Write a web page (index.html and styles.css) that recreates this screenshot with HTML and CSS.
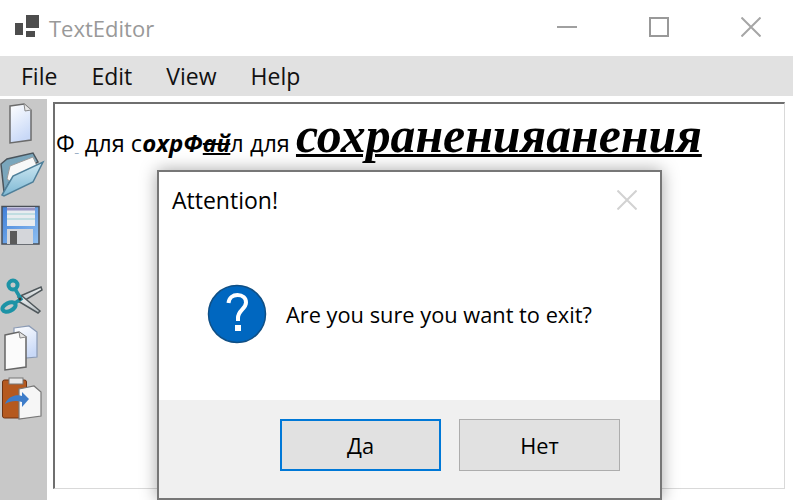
FILE: index.html
```html
<!DOCTYPE html>
<html lang="ru">
<head>
    <meta charset="UTF-8">
    <title>TextEditor</title>
    <link rel="stylesheet" href="styles.css">
</head>
<body>
    <div class="window">
        <div class="titlebar">
            <svg class="app-icon" width="26" height="24" viewBox="0 0 26 24">
                <rect x="1" y="9" width="8" height="12" fill="#4d4d4d"/>
                <rect x="12" y="1" width="13" height="13" fill="#4d4d4d"/>
                <rect x="12" y="17" width="9" height="6" fill="#4d4d4d"/>
            </svg>
            <span class="app-title">TextEditor</span>
            <div class="controls">
                <svg width="20" height="20" viewBox="0 0 20 20"><path d="M0 10H20" stroke="#a0a0a0" stroke-width="2"/></svg>
                <svg width="20" height="20" viewBox="0 0 20 20"><rect x="1" y="1" width="18" height="18" fill="none" stroke="#999" stroke-width="2"/></svg>
                <svg width="20" height="20" viewBox="0 0 20 20"><path d="M0.5 0.5L19.5 19.5M19.5 0.5L0.5 19.5" stroke="#a6a6a6" stroke-width="2"/></svg>
            </div>
        </div>
        <div class="menubar">
            <span>File</span>
            <span>Edit</span>
            <span>View</span>
            <span>Help</span>
        </div>
        <div class="main">
            <div class="toolbar">
                <!-- new -->
                <svg class="tool" viewBox="0 0 47 50">
                    <defs>
                        <linearGradient id="page" x1="0" y1="0" x2="0.4" y2="1">
                            <stop offset="0" stop-color="#ffffff"/>
                            <stop offset="1" stop-color="#c9d9f7"/>
                        </linearGradient>
                        <linearGradient id="blue" x1="0" y1="0" x2="0" y2="1">
                            <stop offset="0" stop-color="#cfe8f2"/>
                            <stop offset="1" stop-color="#7db8d4"/>
                        </linearGradient>
                        <linearGradient id="disk" x1="0" y1="0" x2="1" y2="1">
                            <stop offset="0" stop-color="#3f7fd8"/>
                            <stop offset="1" stop-color="#8fc0f2"/>
                        </linearGradient>
                        <linearGradient id="blade" x1="0" y1="0" x2="0" y2="1">
                            <stop offset="0" stop-color="#f2f4f5"/>
                            <stop offset="1" stop-color="#b4bcc0"/>
                        </linearGradient>
                    </defs>
                    <path d="M10 7L24 5L31 11L31 41L10 44Z" fill="url(#page)" stroke="#6b6b6b" stroke-width="1.5"/>
                    <path d="M24 5L25 12L31 11" fill="#e6e6e6" stroke="#8a8a8a"/>
                </svg>
                <!-- open -->
                <svg class="tool" viewBox="0 0 47 50">
                    <path d="M1 15L7 10L33 4L38 13L13 27L4 43Z" fill="#7aa6bc" stroke="#4a545c" stroke-width="1.5"/>
                    <path d="M7 30L10 17L33 8L37 17L11 33Z" fill="#f8f8f8" stroke="#9a9a9a"/>
                    <path d="M2 46L13 27L43 13L33 33L4 47Z" fill="url(#blue)" stroke="#4f7f99" stroke-width="1.5"/>
                </svg>
                <!-- save -->
                <svg class="tool" viewBox="0 0 47 50">
                    <rect x="2" y="7.500" width="37" height="37.500" fill="url(#disk)" stroke="#4a4f57" stroke-width="1.500"/>
                    <rect x="7" y="8" width="28" height="19" fill="#e8ecf0"/>
                    <path d="M7 10H35" stroke="#9a96c4" stroke-width="3"/>
                    <path d="M7 15H35M7 20H35" stroke="#b4d8dc" stroke-width="1.500"/>
                    <rect x="7" y="30" width="26" height="15" fill="#d4d6da"/>
                    <rect x="10" y="32" width="7" height="13" fill="#5a5a5a"/>
                </svg>
                <!-- cut -->
                <svg class="tool" viewBox="0 0 47 50">
                    <path d="M18 23L41 13L42 16L22 28Z" fill="url(#blade)" stroke="#4f575b" stroke-width="1.5"/>
                    <path d="M18 27L22 22L40 37L38 39Z" fill="url(#blade)" stroke="#4f575b" stroke-width="1.5"/>
                    <circle cx="13" cy="11" r="4.500" fill="none" stroke="#1d93a6" stroke-width="4"/>
                    <ellipse cx="9" cy="33" rx="7" ry="4" fill="none" stroke="#1d93a6" stroke-width="4" transform="rotate(-25 9 33)"/>
                    <path d="M15 15L21 25L15 29" fill="none" stroke="#1d93a6" stroke-width="3.500"/>
                    <circle cx="20" cy="25" r="1.500" fill="#3a3a3a"/>
                </svg>
                <!-- copy -->
                <svg class="tool" viewBox="0 0 47 50">
                    <path d="M14 4L29 2L37 8L37 33L14 35Z" fill="url(#page)" stroke="#8a9ab5" stroke-width="1.200"/>
                    <path d="M5 11L19 8L26 13L26 43L5 46Z" fill="#fbfbfb" stroke="#666" stroke-width="1.500"/>
                    <path d="M19 8L20 14L26 13" fill="#e4e4e4" stroke="#888"/>
                </svg>
                <!-- paste -->
                <svg class="tool" viewBox="0 0 47 50">
                    <rect x="2.500" y="6" width="24" height="38" rx="2" fill="#b5591f" stroke="#6e3312"/>
                    <rect x="9" y="4" width="14" height="6" fill="#e8e8e8" stroke="#777"/>
                    <path d="M19 15L34 12L41 18L41 42L19 45Z" fill="#f6f6f6" stroke="#777" stroke-width="1.200"/>
                    <path d="M5 30C8 22 17 20 22 22L22 18L29 25L22 33L22 28C16 26 10 27 5 30Z" fill="#3d7cc9"/>
                </svg>
            </div>
            <div class="editor">
                <p class="doc">Ф<span class="tiny">_</span> для с<b class="em">охрФ<span class="mark">ай</span></b>л для <b class="big">сохраненияанения</b></p>
            </div>
        </div>
    </div>

    <div class="dialog">
        <div class="dialog-head">
            <span>Attention!</span>
            <svg width="20" height="20" viewBox="0 0 20 20"><path d="M0.5 0.5L19.5 19.5M19.5 0.5L0.5 19.5" stroke="#d2d2d2" stroke-width="2"/></svg>
        </div>
        <div class="dialog-body">
            <svg width="60" height="60" viewBox="0 0 60 60">
                <circle cx="30" cy="30" r="28.500" fill="#0067c0" stroke="#0f4f85" stroke-width="1.500"/>
                <path d="M21.500 19C22 13.500 26 11 30.500 11C35.500 11 39 14 39 18.500C39 25 31 26 31 34V37" fill="none" stroke="#fff" stroke-width="4"/>
                <rect x="28" y="41" width="6" height="6" fill="#fff"/>
            </svg>
            <span>Are you sure you want to exit?</span>
        </div>
        <div class="dialog-foot">
            <button class="btn btn-default">Да</button>
            <button class="btn">Нет</button>
        </div>
    </div>
</body>
</html>
```

FILE: styles.css
```css
body {
    margin: 0;
    width: 793px;
    height: 500px;
    overflow: hidden;
    background: #fff;
    font-family: "Open Sans", sans-serif;
    position: relative;
}

.window {
    height: 500px;
    display: flex;
    flex-direction: column;
}

.titlebar {
    height: 56px;
    display: flex;
    align-items: center;
    padding-left: 14px;
}

.app-icon {
    margin: 0 9px 4px 0;
}

.app-title {
    font-size: 22px;
    color: #999;
}

.controls {
    margin-left: auto;
    display: flex;
    gap: 72px;
    padding-right: 32px;
    margin-top: -2px;
}

.menubar {
    height: 40px;
    background: #e1e1e1;
    display: flex;
    align-items: center;
    gap: 34px;
    padding-left: 21px;
    font-size: 23px;
    color: #111;
}

.main {
    flex: 1;
    display: flex;
    padding-top: 3px;
    min-height: 0;
}

.toolbar {
    width: 47px;
    background: #c8c8c8;
    display: flex;
    flex-direction: column;
    flex-shrink: 0;
}

.tool {
    width: 47px;
    height: 50px;
    flex-shrink: 0;
}

.tool:nth-child(4) {
    margin-top: 25px;
}

.editor {
    width: 732px;
    height: 387px;
    margin: 3px 0 0 6px;
    box-sizing: border-box;
    border-top: 2px solid #6f6f6f;
    border-left: 2px solid #6f6f6f;
    border-right: 1px solid #d9d9d9;
    border-bottom: 1px solid #d9d9d9;
}

.doc {
    margin: 3px 0 0 1px;
    font-size: 23.5px;
    color: #000;
    white-space: nowrap;
}

.tiny {
    font-size: 9px;
    color: #5a7fa5;
}

.em {
    font-style: italic;
    font-size: 24px;
}

.mark {
    font-size: 23px;
    text-decoration: underline line-through;
    text-decoration-thickness: 2px;
}

.big {
    font-family: "Liberation Serif", serif;
    font-style: italic;
    font-size: 49.8px;
    text-decoration: underline;
    text-decoration-thickness: 3px;
}

.dialog {
    position: absolute;
    left: 157px;
    top: 170px;
    width: 505px;
    height: 330px;
    box-sizing: border-box;
    border: 2px solid #777;
    background: #fff;
    box-shadow: 0 0 16px rgba(0, 0, 0, 0.35);
    display: flex;
    flex-direction: column;
}

.dialog-head {
    height: 56px;
    display: flex;
    align-items: center;
    justify-content: space-between;
    padding: 0 23px 0 13px;
    font-size: 23px;
    color: #000;
}

.dialog-body {
    height: 172px;
    display: flex;
    align-items: center;
    gap: 19px;
    padding-left: 48px;
    font-size: 21.8px;
    color: #000;
}

.dialog-foot {
    flex: 1;
    background: #f0f0f0;
    display: flex;
    gap: 18px;
    padding: 19px 0 0 121px;
    align-items: flex-start;
}

.btn {
    width: 161px;
    height: 52px;
    background: #e1e1e1;
    border: 1px solid #adadad;
    font-family: inherit;
    font-size: 21.8px;
    color: #000;
}

.btn-default {
    border: 2px solid #0078d7;
}
```
